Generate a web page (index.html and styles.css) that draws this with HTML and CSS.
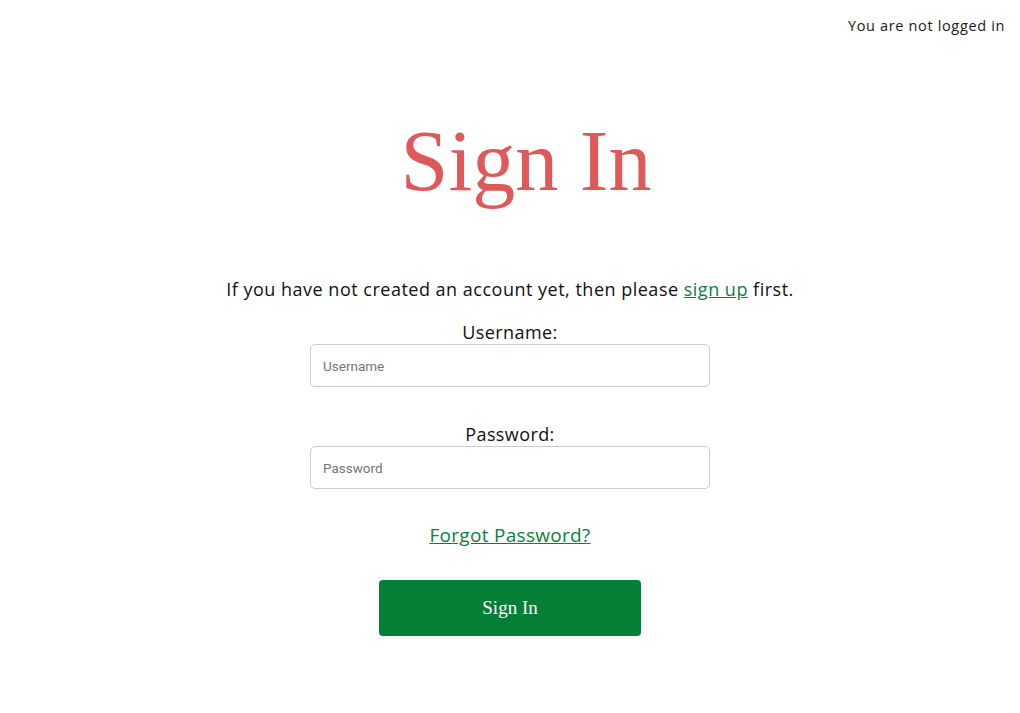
FILE: index.html
```html
<!DOCTYPE html>
<html lang="en">
<head>
<meta charset="utf-8">
<title>Sign In</title>
<link rel="stylesheet" href="styles.css">
</head>
<body>
<header class="topbar">
  <span class="status">You are not logged in</span>
</header>
<main class="page">
  <h1 class="title">Sign In</h1>
  <p class="intro">If you have not created an account yet, then please <a class="link" href="#">sign up</a> first.</p>
  <form class="form">
    <label class="label" for="username">Username:</label>
    <input class="field" id="username" type="text" placeholder="Username">
    <label class="label label-second" for="password">Password:</label>
    <input class="field" id="password" type="password" placeholder="Password">
    <a class="link forgot" href="#">Forgot Password?</a>
    <button class="btn" type="button">Sign In</button>
  </form>
</main>
</body>
</html>
```

FILE: styles.css
```css
html, body {
  margin: 0;
  padding: 0;
  background: #ffffff;
}
body {
  font-family: "Open Sans", "Lato", sans-serif;
  color: #111111;
}
.topbar {
  display: flex;
  justify-content: flex-end;
  padding: 16px 15px 0 0;
  height: 34px;
}
.status {
  font-size: 14.5px;
  letter-spacing: 0.65px;
  color: #1a1a1a;
}
.page {
  display: flex;
  flex-direction: column;
  align-items: center;
}
.title {
  margin: 61px 0 0 32px;
  font-family: "Liberation Serif", "DejaVu Serif", serif;
  font-weight: 400;
  font-size: 86px;
  line-height: 100px;
  color: #de5a5a;
}
.intro {
  margin: 65px 0 0;
  font-size: 18px;
  line-height: 26px;
  letter-spacing: 0.5px;
}
.link {
  color: #0b7f3b;
  text-decoration: underline;
}
.form {
  width: 400px;
  display: flex;
  flex-direction: column;
  align-items: center;
  margin-top: 18px;
}
.label {
  font-size: 18px;
  line-height: 24px;
  letter-spacing: 0.4px;
}
.label-second {
  margin-top: 35px;
}
.field {
  box-sizing: border-box;
  width: 400px;
  height: 43px;
  border: 1px solid #cccccc;
  border-radius: 5px;
  padding: 0 12px;
  font-family: "Roboto", sans-serif;
  font-size: 13.5px;
  color: #333;
  outline: none;
}
.field::placeholder {
  color: #757575;
}
.forgot {
  margin-top: 33px;
  font-size: 19px;
  line-height: 26px;
  letter-spacing: 0.3px;
}
.btn {
  margin-top: 32px;
  width: 262px;
  height: 56px;
  border: none;
  border-radius: 4px;
  background: #067f36;
  color: #ffffff;
  font-family: "Liberation Serif", "DejaVu Serif", serif;
  font-size: 19px;
  cursor: pointer;
}
```
